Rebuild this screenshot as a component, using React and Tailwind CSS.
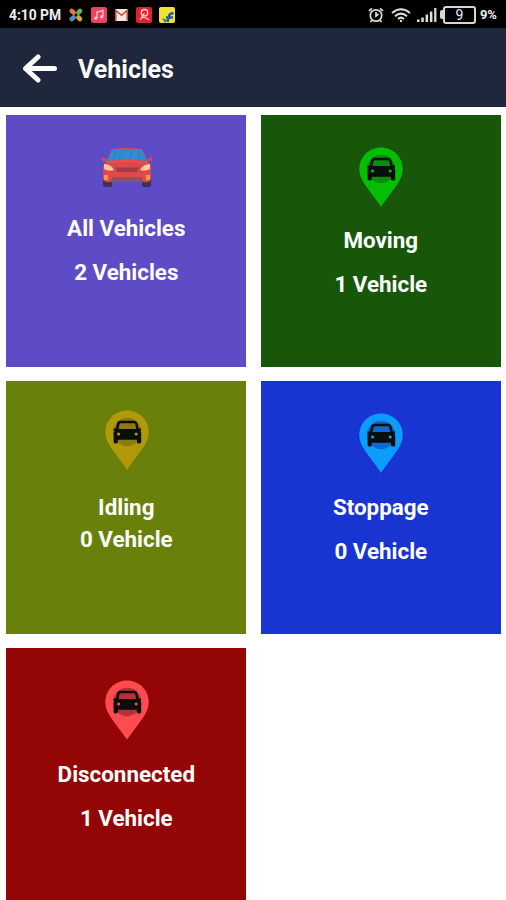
import React from 'react'

const tiles = [
  { label: 'All Vehicles', count: '2 Vehicles', bg: 'bg-[#5e4bc6]', pad: 'pt-[33px]', gap: 'mt-[27px]', countGap: 'mt-[18px]' },
  { label: 'Moving', count: '1 Vehicle', bg: 'bg-[#18570a]', pad: 'pt-8', gap: 'mt-[20px]', countGap: 'mt-[18px]', pin: '#04be06', inner: '#078f09' },
  { label: 'Idling', count: '0 Vehicle', bg: 'bg-[#69800a]', pad: 'pt-[29px]', gap: 'mt-[24px]', countGap: 'mt-[6px]', pin: '#b19a09', inner: '#8d7b10' },
  { label: 'Stoppage', count: '0 Vehicle', bg: 'bg-[#1835d1]', pad: 'pt-8', gap: 'mt-[21px]', countGap: 'mt-[18px]', pin: '#0c9cfc', inner: '#0f69d0' },
  { label: 'Disconnected', count: '1 Vehicle', bg: 'bg-[#930605]', pad: 'pt-8', gap: 'mt-[21px]', countGap: 'mt-[18px]', pin: '#fd4c50', inner: '#b92f38' }
]

function PinIcon({ color, inner }) {
  return (
    <svg className="w-11 h-[60px] ml-px" viewBox="0 0 44 60" fill="none">
      <path d="M22 0.5C10 0.5 0.3 10 0.3 22C0.3 28 3 33 6.5 38.5L22 59.5L37.5 38.5C41 33 43.7 28 43.7 22C43.7 10 34 0.5 22 0.5Z" fill={color} />
      <circle cx="22.2" cy="22" r="14.2" fill={inner} />
      <path
        d="M15.5 10.8H29C31 10.8 32 11.8 32.5 13.5L33.8 18.6H36V20.7H34.9C35.9 21.7 36.2 22.7 36.2 24.2V32Q36.2 33.6 34.2 33.6Q31.9 33.6 31.9 32V29.8H12.8V32Q12.8 33.6 10.7 33.6Q8.6 33.6 8.6 32V24.2C8.6 22.7 8.9 21.7 9.9 20.7H8.6V18.6H10.8L12 13.5C12.5 11.8 13.5 10.8 15.5 10.8Z"
        fill="#080f0a"
      />
      <path d="M16 13.2H28.8C29.8 13.2 30 13.6 30.3 14.6L31.3 18.9H13.5L14.5 14.6C14.8 13.6 15 13.2 16 13.2Z" fill={inner} />
      <circle cx="13.6" cy="24" r="1.6" fill={color} />
      <circle cx="31.2" cy="24" r="1.6" fill={color} />
    </svg>
  )
}

function CarIcon() {
  return (
    <svg className="w-[52px] h-10 ml-px" viewBox="0 0 52 40">
      <rect x="2" y="31" width="9" height="8" rx="2" fill="#403252" />
      <rect x="41" y="31" width="9" height="8" rx="2" fill="#403252" />
      <path d="M0 10Q2 8 5 11L7 14L2 13ZM52 10Q50 8 47 11L45 14L50 13Z" fill="#d4475c" />
      <path d="M11 1Q26 -1 41 1L47 14L50 18V31Q48 35 43 34H9Q4 35 2 31V18L5 14Z" fill="#df474c" />
      <path d="M11 2Q26 0 41 2L46 13Q26 10 6 13Z" fill="#318bd2" />
      <path d="M15 3L12 11M23 2L18 10M32 2L29 10M38 3L37 11" stroke="#2c7fc6" strokeWidth="1.2" />
      <path d="M6 14.5Q26 11.5 46 14.5" stroke="#e94f50" strokeWidth="2" fill="none" />
      <path d="M3 16Q10 16 13 22Q8 24 3 21ZM49 16Q42 16 39 22Q44 24 49 21Z" fill="#ffc79a" />
      <path d="M14 19.5H38L36 24H16Z" fill="#a03c45" />
      <path d="M3 27H7V32H3ZM45 27H49V32H45Z" fill="#ff9b3e" />
      <path d="M12 29H40L43 34H9Z" fill="#8b535c" />
      <path d="M7 26Q26 29 45 26" stroke="#ea4d4e" fill="none" />
    </svg>
  )
}

function NotificationIcons() {
  return (
    <div className="flex items-center ml-[7px]">
      <svg className="w-4 h-4" viewBox="0 0 16 16" strokeWidth="4.6" strokeLinecap="round">
        <path d="M3.7 4L5.6 5.6" stroke="#e6783d" />
        <path d="M12 4L10.4 5.6" stroke="#72ad54" />
        <path d="M3.7 12L5.6 10.4" stroke="#4e93bd" />
        <path d="M12 12L10.4 10.4" stroke="#d6a33e" />
      </svg>
      <svg className="w-4 h-4 ml-[7px]" viewBox="0 0 16 16">
        <rect width="16" height="16" rx="2.5" fill="#ed4360" />
        <path d="M6 11V5L12 3.5V9.5" stroke="#ffc0ca" strokeWidth="1.4" fill="none" />
        <circle cx="4.7" cy="11.3" r="1.7" fill="#ffc0ca" />
        <circle cx="10.7" cy="9.8" r="1.7" fill="#ffc0ca" />
      </svg>
      <svg className="w-[13px] h-3 ml-[8px]" viewBox="0 0 13 12">
        <rect width="13" height="12" rx="1" fill="#f5e8e3" />
        <path d="M0.8 11.5V1.5L6.5 6.3L12.2 1.5V11.5" stroke="#c9493f" strokeWidth="1.5" fill="none" />
      </svg>
      <svg className="w-4 h-4 ml-[8px]" viewBox="0 0 16 16">
        <rect width="16" height="16" rx="2" fill="#e5202d" />
        <circle cx="8.5" cy="5.7" r="3.2" stroke="#ffd0d0" strokeWidth="1.4" fill="none" />
        <path d="M8.5 6L4 13M5 11Q9 9 13 13" stroke="#ffd0d0" strokeWidth="1.2" fill="none" />
      </svg>
      <svg className="w-4 h-4 ml-[7px]" viewBox="0 0 16 16">
        <rect width="16" height="16" rx="2" fill="#f6df34" />
        <path d="M8.5 15L10 9Q10.8 6 14.5 6.3M7 10.5H14" stroke="#1c609d" strokeWidth="2.5" fill="none" />
        <path d="M3 11L8 13L6 16Z" fill="#2c799b" />
      </svg>
    </div>
  )
}

function StatusBar() {
  return (
    <div className="h-7 bg-black flex items-center pt-px pl-[9px] pr-2 text-[#eeeeee]">
      <span className="text-[13.8px] font-bold whitespace-nowrap w-[52px] pt-[2px]">4:10 PM</span>
      <NotificationIcons />
      <div className="ml-auto flex items-center">
        <svg className="w-4 h-4" viewBox="0 0 16 16" fill="none" stroke="#d8d8d8" strokeWidth="1.7">
          <circle cx="8" cy="8.5" r="5.7" />
          <path d="M1 4L4 1.3M12 1.3L15 4M8 5V9L10.5 7M4 13L2.5 15M12 13L13.5 15" />
        </svg>
        <svg className="w-5 h-4 ml-[7px]" viewBox="0 0 20 16" fill="none" stroke="#dedede" strokeWidth="2">
          <path d="M1 6Q10 -1.5 19 6M4 9.2Q10 4 16 9.2M7 12Q10 9.2 13 12" />
          <circle cx="10" cy="14" r="1.2" fill="#dedede" stroke="none" />
        </svg>
        <svg className="w-5 h-4 ml-[6px]" viewBox="0 0 20 16" fill="#dedede">
          <path d="M0 12.5H2.5V15H0ZM4.3 10.5H6.8V15H4.3ZM8.6 7.5H11.1V15H8.6ZM12.9 4.5H15.4V15H12.9ZM17.2 1H19.4V15H17.2Z" />
        </svg>
        <div className="flex items-center ml-[3px]">
          <div className="w-[3px] h-[9px] bg-[#d7d7d7] rounded-l-xs" />
          <div className="w-[33px] h-[18px] border-2 border-[#d7d7d7] rounded-[3px] text-[14px] leading-none flex items-center justify-center">9</div>
        </div>
        <span className="ml-[4px] text-[13px] font-bold w-[18px] whitespace-nowrap tracking-[-0.3px]">9%</span>
      </div>
    </div>
  )
}

export default function App() {
  return (
    <div className="w-[506px] h-[900px] overflow-hidden bg-white font-['Roboto',sans-serif]">
      <StatusBar />

      {/* Header */}
      <div className="h-[78.5px] bg-[#1e273b] border-b border-[#172137] flex items-center pl-[22px] pt-[4px]">
        <svg className="w-[35px] h-[30px]" viewBox="0 0 35 30" fill="none" stroke="white" strokeWidth="5" strokeLinecap="round" strokeLinejoin="round">
          <path d="M16 3L3.5 14.5L16 26M4 14.5H32.5" />
        </svg>
        <h1 className="ml-[21px] pt-[2px] text-[25px] leading-7 font-bold text-white">Vehicles</h1>
      </div>

      {/* Tiles */}
      <div className="grid grid-cols-[240px_240px] gap-x-[14.5px] gap-y-[14.5px] pl-[6.3px] pt-[8px]">
        {tiles.map((tile) => (
          <div key={tile.label} className={`h-[252.3px] flex flex-col items-center text-white ${tile.bg} ${tile.pad}`}>
            {tile.pin ? <PinIcon color={tile.pin} inner={tile.inner} /> : <CarIcon />}
            <p className={`text-[22.4px] leading-[26px] font-bold ${tile.gap}`}>{tile.label}</p>
            <p className={`text-[22.4px] leading-[26px] font-bold ${tile.countGap}`}>{tile.count}</p>
          </div>
        ))}
      </div>
    </div>
  )
}
